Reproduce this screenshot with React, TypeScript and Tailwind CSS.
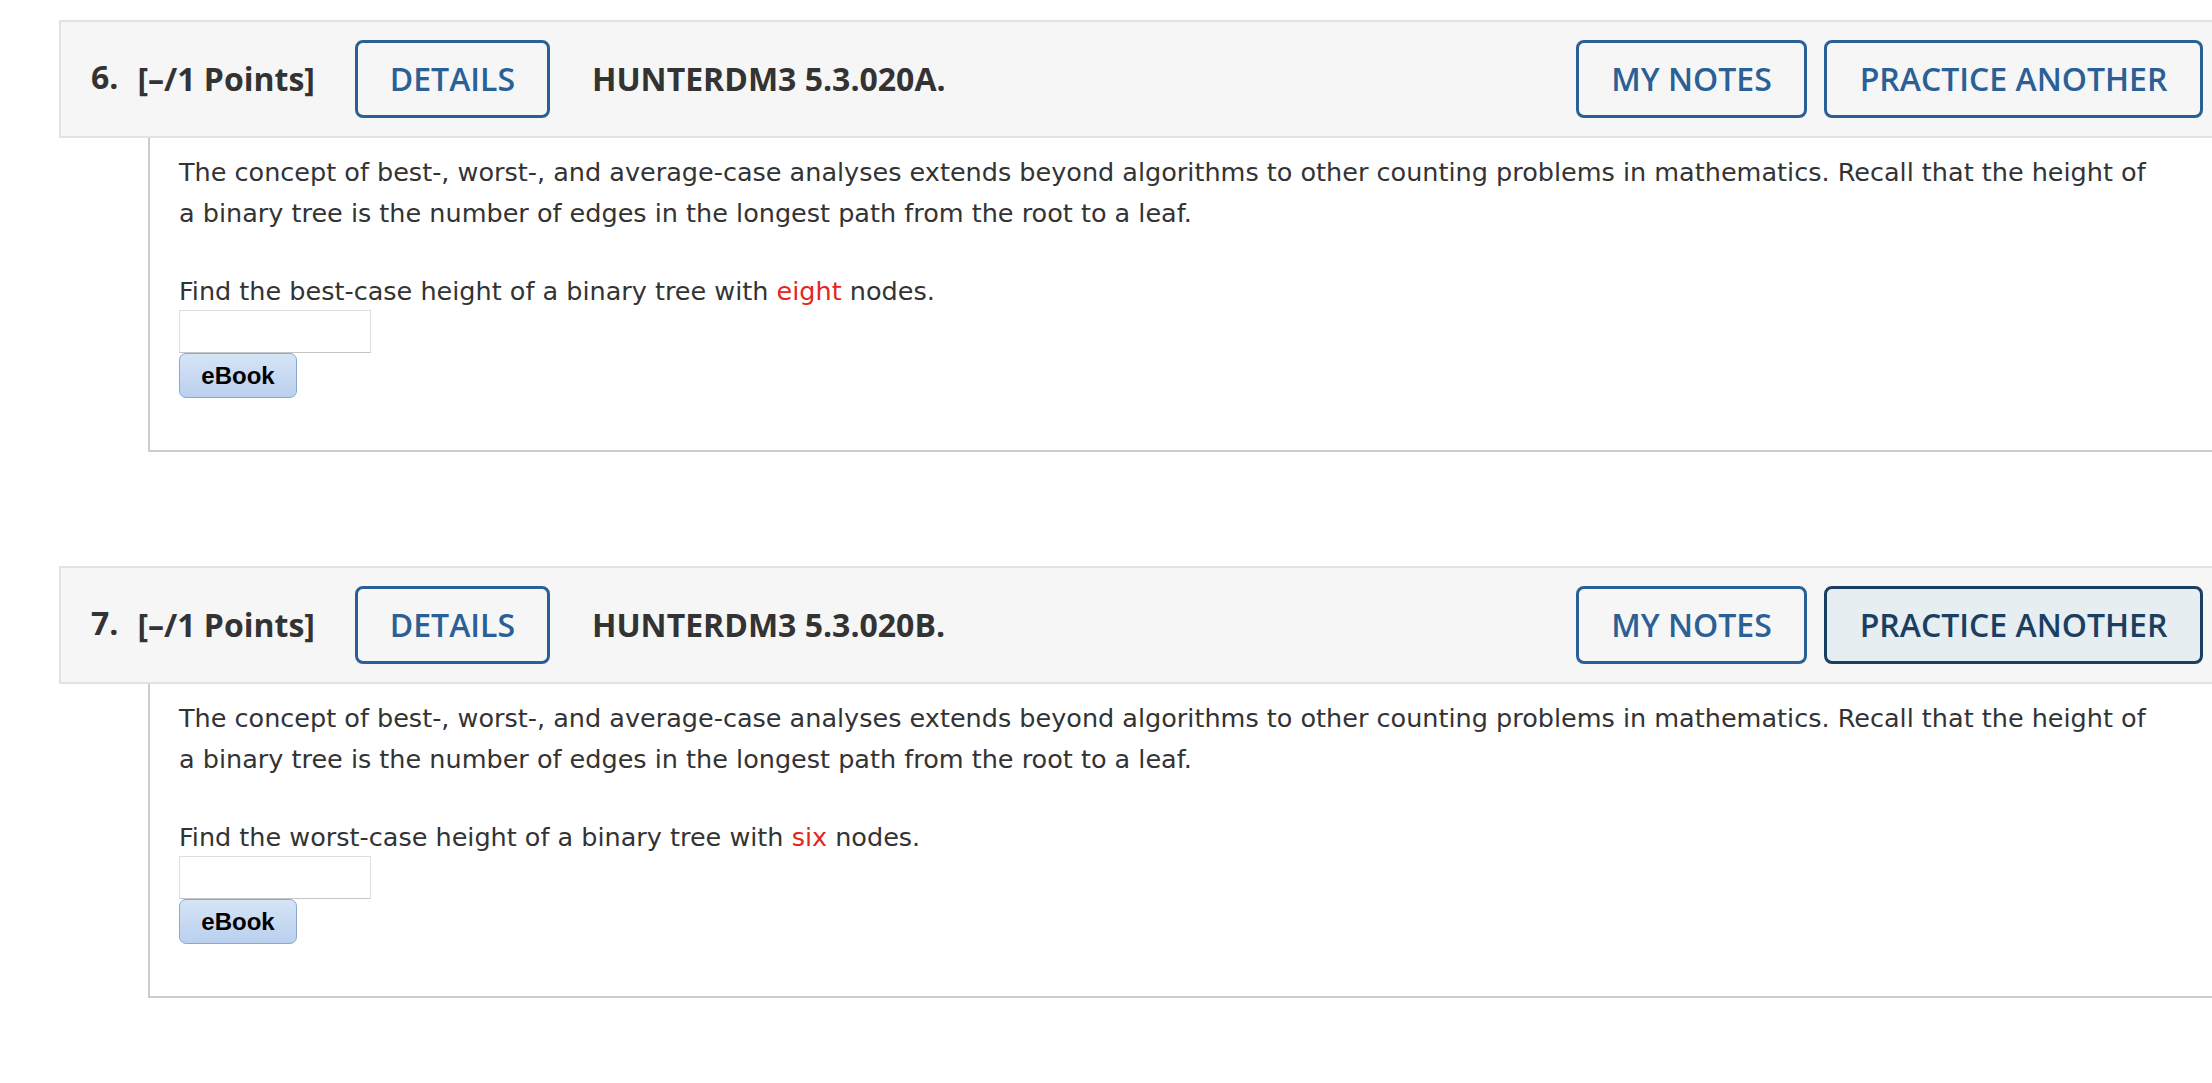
import React from 'react';

type Question = {
  num: number;
  code: string;
  kind: string;
  count: string;
  practiceActive?: boolean;
};

const questions: Question[] = [
  { num: 6, code: 'HUNTERDM3 5.3.020A.', kind: 'best-case', count: 'eight' },
  { num: 7, code: 'HUNTERDM3 5.3.020B.', kind: 'worst-case', count: 'six', practiceActive: true },
];

const heading = { fontFamily: '"Open Sans", "Liberation Sans", sans-serif' };
const body = { fontFamily: '"DejaVu Sans", Verdana, sans-serif' };

const QuestionBlock = ({ q }: { q: Question }) => (
  <div className="w-[2171px]">
    {/* header bar */}
    <div
      style={heading}
      className="flex items-center h-[118px] border-2 border-[#e2e2e2] bg-[#f6f6f6] pl-[30px] pr-[25px] text-[#333]"
    >
      <span className="text-[32px] font-bold -mt-[4px]">{q.num}.</span>
      <span className="ml-[19px] text-[32px] font-bold">[–/1 Points]</span>
      <button className="ml-[40px] h-[78px] w-[195px] rounded-[8px] border-[3px] border-[#2a6096] text-[32px] font-semibold text-[#2a6096]">
        DETAILS
      </button>
      <span className="ml-[42px] text-[32px] font-bold">{q.code}</span>
      <div className="ml-auto flex gap-[17px]">
        <button className="h-[78px] w-[231px] rounded-[8px] border-[3px] border-[#2a6096] text-[32px] font-semibold text-[#2a6096]">
          MY NOTES
        </button>
        {q.practiceActive ? (
          <button className="h-[78px] w-[379px] rounded-[8px] border-[3px] border-[#1b3f62] bg-[#e6eef2] text-[32px] font-semibold text-[#1b3f62]">
            PRACTICE ANOTHER
          </button>
        ) : (
          <button className="h-[78px] w-[379px] rounded-[8px] border-[3px] border-[#2a6096] text-[32px] font-semibold text-[#2a6096]">
            PRACTICE ANOTHER
          </button>
        )}
      </div>
    </div>

    {/* question body */}
    <div
      style={body}
      className="ml-[89px] border-l-2 border-b-2 border-[#cccccc] pl-[29px] pr-[70px] pt-[14px] pb-[52px] text-[25.5px] leading-[41px] text-[#333]"
    >
      <p>
        The concept of best-, worst-, and average-case analyses extends beyond algorithms to other counting problems in
        mathematics. Recall that the height of a binary tree is the number of edges in the longest path from the root to a
        leaf.
      </p>
      <p className="mt-[37px]">
        Find the {q.kind} height of a binary tree with <span className="text-[#e5261d]">{q.count}</span> nodes.
      </p>
      <div className="-mt-[2px] h-[43px] w-[192px] border border-[#dedede] border-b-[#c4c4c4] bg-white" />
      <button
        style={{ fontFamily: '"Liberation Sans", Arial, sans-serif' }}
        className="block h-[45px] w-[118px] rounded-[7px] border border-[#8ba8d2] bg-gradient-to-b from-[#d6e4f6] to-[#bad0ee] text-[24px] font-bold leading-none text-black"
      >
        eBook
      </button>
    </div>
  </div>
);

export default function App() {
  return (
    <div className="w-[2212px] h-[1083px] overflow-hidden bg-white pt-[20px] pl-[59px]">
      <div className="flex flex-col gap-[114px]">
        {questions.map((q) => (
          <QuestionBlock key={q.num} q={q} />
        ))}
      </div>
    </div>
  );
}
